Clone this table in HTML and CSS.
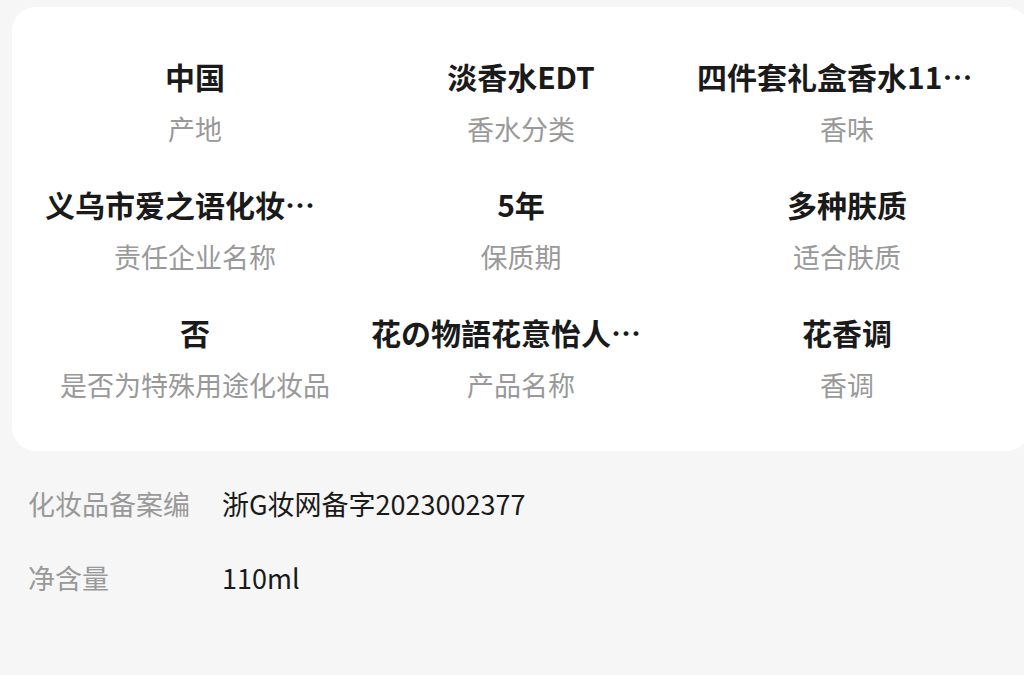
FILE: index.html
```html
<!DOCTYPE html>
<html lang="zh-CN">

<head>
    <meta charset="UTF-8">
    <meta name="viewport" content="width=device-width, initial-scale=1.0">
    <title>商品参数</title>
    <link rel="stylesheet" href="styles.css">
</head>

<body>
    <div class="param-card">
        <div class="param-grid">
            <div class="param-item">
                <div class="param-value"><span>中国</span></div>
                <div class="param-name">产地</div>
            </div>
            <div class="param-item">
                <div class="param-value"><span>淡香水EDT</span></div>
                <div class="param-name">香水分类</div>
            </div>
            <div class="param-item">
                <div class="param-value long"><span>四件套礼盒香水110ml*4</span></div>
                <div class="param-name">香味</div>
            </div>

            <div class="param-item">
                <div class="param-value long"><span>义乌市爱之语化妆品有限公司</span></div>
                <div class="param-name">责任企业名称</div>
            </div>
            <div class="param-item">
                <div class="param-value"><span>5年</span></div>
                <div class="param-name">保质期</div>
            </div>
            <div class="param-item">
                <div class="param-value"><span>多种肤质</span></div>
                <div class="param-name">适合肤质</div>
            </div>

            <div class="param-item">
                <div class="param-value"><span>否</span></div>
                <div class="param-name">是否为特殊用途化妆品</div>
            </div>
            <div class="param-item">
                <div class="param-value long"><span>花の物語花意怡人香水礼盒</span></div>
                <div class="param-name">产品名称</div>
            </div>
            <div class="param-item">
                <div class="param-value"><span>花香调</span></div>
                <div class="param-name">香调</div>
            </div>
        </div>
    </div>

    <div class="param-list">
        <div class="list-row">
            <span class="list-label">化妆品备案编</span>
            <span class="list-text">浙G妆网备字2023002377</span>
        </div>
        <div class="list-row">
            <span class="list-label">净含量</span>
            <span class="list-text">110ml</span>
        </div>
    </div>
</body>

</html>
```
FILE: styles.css
```css
html,
body {
    overflow: hidden;
}

body {
    margin: 0;
    padding: 0;
    background: #f6f6f6;
    font-family: "Noto Sans CJK SC", "Noto Sans", sans-serif;
    color: #1a1a1a;
}

/* white card with the 3x3 params */
.param-card {
    width: 1018px;
    margin: 7px 0 0 12px;
    padding: 47px 20px 46px;
    box-sizing: border-box;
    background: #fff;
    border-radius: 24px;
}

.param-grid {
    display: grid;
    grid-template-columns: repeat(3, 326px);
    row-gap: 33px;
}

.param-item {
    padding: 0 13px;
    text-align: center;
    min-width: 0;
}

.param-value {
    font-size: 30px;
    line-height: 44px;
    font-weight: bold;
    white-space: nowrap;
}

.param-value span {
    display: inline-block;
    max-width: 286px;
    vertical-align: top;
    overflow: hidden;
    text-overflow: ellipsis;
}

/* clipped values start at the left edge */
.param-value.long span {
    margin-right: 14px;
}

.param-name {
    margin-top: 11px;
    font-size: 27px;
    line-height: 40px;
    color: #999;
    white-space: nowrap;
}

/* rows under the card */
.param-list {
    margin-top: 16px;
    padding: 0 28px;
}

.list-row {
    display: flex;
    padding: 17px 0;
    font-size: 27px;
    line-height: 40px;
}

.list-label {
    width: 194px;
    flex-shrink: 0;
    color: #999;
}

.list-text {
    color: #1a1a1a;
}
```
